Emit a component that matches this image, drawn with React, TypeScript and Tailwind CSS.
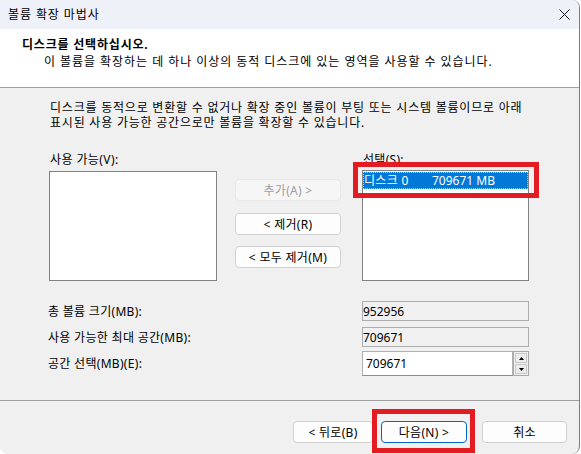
export default function App() {
  const btn =
    "h-[22px] flex items-center justify-center rounded-[4px] border bg-[#fdfdfd] border-[#d0d0d0] whitespace-nowrap tracking-[0.3px]";
  return (
    <div className="relative w-[581px] h-[454px] bg-white overflow-hidden font-['Noto_Sans','Noto_Sans_CJK_KR',sans-serif] text-[12px] leading-[15px] text-black">
      <div className="flex flex-col w-[580px] h-[454px] border-r border-[#7c7c7c] rounded-tr-[8px] rounded-br-[8px] rounded-bl-[8px] overflow-hidden bg-[#f0f0f0]">
        {/* title bar */}
        <div className="h-[29px] shrink-0 bg-[#eff1f8] flex items-center justify-between pl-[8px] pr-[9px]">
          <span className="tracking-[0.9px]">볼륨 확장 마법사</span>
          <svg width="11" height="11" viewBox="0 0 11 11">
            <path d="M0.5 0.5L10.5 10.5M10.5 0.5L0.5 10.5" stroke="#1a1a1a" strokeWidth="1" />
          </svg>
        </div>

        {/* header */}
        <div className="h-[59px] shrink-0 bg-white border-b border-[#a0a0a0] pt-[8px]">
          <div className="pl-[22px] font-bold whitespace-nowrap tracking-[0.8px]">디스크를 선택하십시오.</div>
          <div className="pl-[44px] mt-[2px] whitespace-nowrap tracking-[0.95px]">
            이 볼륨을 확장하는 데 하나 이상의 동적 디스크에 있는 영역을 사용할 수 있습니다.
          </div>
        </div>

        {/* body */}
        <div className="h-[312px] shrink-0 pt-[12px]">
          <div className="pl-[50px] whitespace-nowrap tracking-[0.78px]">
            <div>디스크를 동적으로 변환할 수 없거나 확장 중인 볼륨이 부팅 또는 시스템 볼륨이므로 아래</div>
            <div>표시된 사용 가능한 공간으로만 볼륨을 확장할 수 있습니다.</div>
          </div>

          <div className="flex pl-[49px] mt-[22px]">
            {/* left list */}
            <div className="w-[168px] flex flex-col">
              <div className="pl-[1px] tracking-[0.4px]">사용 가능(V):</div>
              <div className="mt-[4px] h-[110px] bg-white border border-[#838383]" />
            </div>

            {/* middle buttons */}
            <div className="ml-[18px] w-[106px] flex flex-col pt-[27px]">
              <div className="h-[22px] flex items-center justify-center rounded-[4px] border border-[#e8e8e8] bg-[#f6f6f6] text-[#9d9d9d] tracking-[0.3px]">
                추가(A) &gt;
              </div>
              <div className={btn + " mt-[12px]"}>&lt; 제거(R)</div>
              <div className={btn + " mt-[11px]"}>&lt; 모두 제거(M)</div>
            </div>

            {/* right list */}
            <div className="ml-[21px] w-[167px] flex flex-col">
              <div className="pl-[1px] tracking-[0.3px]">선택(S):</div>
              <div className="mt-[3px] h-[111px] bg-white border border-[#838383] pt-[1px]">
                <div className="h-[17px] bg-[#0078d7] text-white flex items-center border border-dotted border-[#a9d0f5] whitespace-nowrap">
                  <span className="w-[68px] tracking-[0.3px]">디스크 0</span>
                  <span>709671 MB</span>
                </div>
              </div>
            </div>
          </div>

          {/* fields */}
          <div className="mt-[20px] pl-[48px] grid grid-cols-[314px_167px]">
            <div className="h-[20px] flex items-center tracking-[0.3px]">총 볼륨 크기(MB):</div>
            <div className="h-[20px] flex items-center border border-[#adadad] bg-[#f0f0f0]">952956</div>

            <div className="mt-[6px] h-[20px] flex items-center tracking-[0.3px]">사용 가능한 최대 공간(MB):</div>
            <div className="mt-[6px] h-[20px] flex items-center border border-[#adadad] bg-[#f0f0f0]">709671</div>

            <div className="mt-[4px] h-[25px] flex items-center tracking-[0.3px]">공간 선택(MB)(E):</div>
            <div className="mt-[4px] h-[25px] flex">
              <div className="flex-1 bg-white border border-[#b0b0b0] border-b-[#8c8c8c] flex items-center pl-[3px]">
                709671
              </div>
              <div className="w-[16px] flex flex-col border border-[#a8a8a8] bg-[#f0f0f0] p-[1px] gap-[1px]">
                <div className="flex-1 border border-[#c8c8c8] bg-[#ececec] flex items-center justify-center">
                  <svg width="5" height="3" viewBox="0 0 5 3">
                    <path d="M2.5 0L5 3H0Z" fill="#000" />
                  </svg>
                </div>
                <div className="flex-1 border border-[#c8c8c8] bg-[#ececec] flex items-center justify-center">
                  <svg width="5" height="3" viewBox="0 0 5 3">
                    <path d="M0 0H5L2.5 3Z" fill="#000" />
                  </svg>
                </div>
              </div>
            </div>
          </div>
        </div>

        {/* footer */}
        <div className="flex-1 border-t border-[#a0a0a0] pt-[20px] pr-[12px] flex justify-end items-start">
          <div className={btn + " w-[80px]"}>&lt; 뒤로(B)</div>
          <div className="ml-[8px] w-[86px] h-[22px] flex items-center justify-center rounded-[4px] border border-[#0067c0] bg-[#fdfdfd] whitespace-nowrap tracking-[0.3px]">
            다음(N) &gt;
          </div>
          <div className={btn + " ml-[15px] w-[85px]"}>취소</div>
        </div>
      </div>

      {/* annotation overlays */}
      <div className="absolute left-[353px] top-[162px] w-[186px] h-[36px] border-[5px] border-[#e31b23]" />
      <div className="absolute left-[372px] top-[409px] w-[103px] h-[44px] border-[5px] border-[#e31b23]" />
    </div>
  );
}
